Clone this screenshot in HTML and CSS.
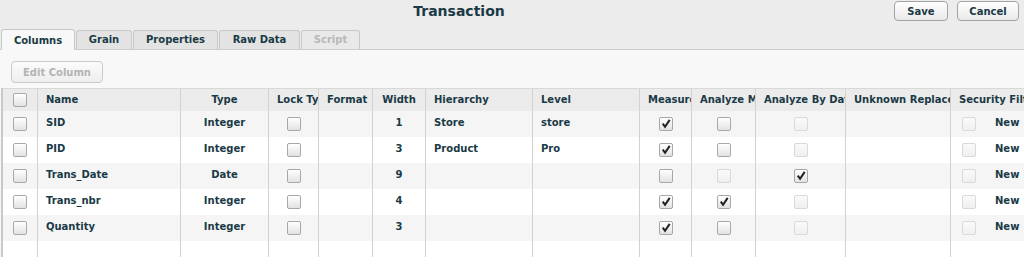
FILE: index.html
```html
<!DOCTYPE html>
<html lang="en">
<head>
    <meta charset="UTF-8">
    <title>Transaction</title>
    <link rel="stylesheet" href="styles.css">
</head>
<body>
    <div class="topbar">
        <h1 class="title">Transaction</h1>
        <div class="actions">
            <button class="btn btn-save">Save</button>
            <button class="btn btn-cancel">Cancel</button>
        </div>
    </div>
    <div class="tabs">
        <a class="tab tab-columns active">Columns</a>
        <a class="tab tab-grain">Grain</a>
        <a class="tab tab-props">Properties</a>
        <a class="tab tab-raw">Raw Data</a>
        <a class="tab tab-script disabled">Script</a>
    </div>
    <div class="panel">
        <div class="toolbar">
            <button class="btn btn-edit" disabled>Edit Column</button>
        </div>
        <div class="grid">
            <div class="row head">
                <div class="cell mid"><span class="cb"></span></div>
                <div class="cell">Name</div>
                <div class="cell center">Type</div>
                <div class="cell">Lock Type</div>
                <div class="cell">Format</div>
                <div class="cell center">Width</div>
                <div class="cell">Hierarchy</div>
                <div class="cell">Level</div>
                <div class="cell">Measure</div>
                <div class="cell">Analyze Measure</div>
                <div class="cell">Analyze By Date</div>
                <div class="cell">Unknown Replacement</div>
                <div class="cell">Security Filter</div>
            </div>
            <div class="row odd">
                <div class="cell mid"><span class="cb"></span></div>
                <div class="cell">SID</div>
                <div class="cell center">Integer</div>
                <div class="cell mid"><span class="cb"></span></div>
                <div class="cell"></div>
                <div class="cell center">1</div>
                <div class="cell">Store</div>
                <div class="cell">store</div>
                <div class="cell mid"><span class="cb checked"><svg viewBox="0 0 13 13"><path d="M3 6 L5.5 9.5 L10.5 2"/></svg></span></div>
                <div class="cell mid"><span class="cb"></span></div>
                <div class="cell mid"><span class="cb off"></span></div>
                <div class="cell"></div>
                <div class="cell sec"><span class="cb off"></span><a class="new">New</a></div>
            </div>
            <div class="row">
                <div class="cell mid"><span class="cb"></span></div>
                <div class="cell">PID</div>
                <div class="cell center">Integer</div>
                <div class="cell mid"><span class="cb"></span></div>
                <div class="cell"></div>
                <div class="cell center">3</div>
                <div class="cell">Product</div>
                <div class="cell">Pro</div>
                <div class="cell mid"><span class="cb checked"><svg viewBox="0 0 13 13"><path d="M3 6 L5.5 9.5 L10.5 2"/></svg></span></div>
                <div class="cell mid"><span class="cb"></span></div>
                <div class="cell mid"><span class="cb off"></span></div>
                <div class="cell"></div>
                <div class="cell sec"><span class="cb off"></span><a class="new">New</a></div>
            </div>
            <div class="row odd">
                <div class="cell mid"><span class="cb"></span></div>
                <div class="cell">Trans_Date</div>
                <div class="cell center">Date</div>
                <div class="cell mid"><span class="cb"></span></div>
                <div class="cell"></div>
                <div class="cell center">9</div>
                <div class="cell"></div>
                <div class="cell"></div>
                <div class="cell mid"><span class="cb"></span></div>
                <div class="cell mid"><span class="cb off"></span></div>
                <div class="cell mid"><span class="cb checked"><svg viewBox="0 0 13 13"><path d="M3 6 L5.5 9.5 L10.5 2"/></svg></span></div>
                <div class="cell"></div>
                <div class="cell sec"><span class="cb off"></span><a class="new">New</a></div>
            </div>
            <div class="row">
                <div class="cell mid"><span class="cb"></span></div>
                <div class="cell">Trans_nbr</div>
                <div class="cell center">Integer</div>
                <div class="cell mid"><span class="cb"></span></div>
                <div class="cell"></div>
                <div class="cell center">4</div>
                <div class="cell"></div>
                <div class="cell"></div>
                <div class="cell mid"><span class="cb checked"><svg viewBox="0 0 13 13"><path d="M3 6 L5.5 9.5 L10.5 2"/></svg></span></div>
                <div class="cell mid"><span class="cb checked"><svg viewBox="0 0 13 13"><path d="M3 6 L5.5 9.5 L10.5 2"/></svg></span></div>
                <div class="cell mid"><span class="cb off"></span></div>
                <div class="cell"></div>
                <div class="cell sec"><span class="cb off"></span><a class="new">New</a></div>
            </div>
            <div class="row odd">
                <div class="cell mid"><span class="cb"></span></div>
                <div class="cell">Quantity</div>
                <div class="cell center">Integer</div>
                <div class="cell mid"><span class="cb"></span></div>
                <div class="cell"></div>
                <div class="cell center">3</div>
                <div class="cell"></div>
                <div class="cell"></div>
                <div class="cell mid"><span class="cb checked"><svg viewBox="0 0 13 13"><path d="M3 6 L5.5 9.5 L10.5 2"/></svg></span></div>
                <div class="cell mid"><span class="cb"></span></div>
                <div class="cell mid"><span class="cb off"></span></div>
                <div class="cell"></div>
                <div class="cell sec"><span class="cb off"></span><a class="new">New</a></div>
            </div>
            <div class="row filler">
                <div class="cell"></div><div class="cell"></div><div class="cell"></div>
                <div class="cell"></div><div class="cell"></div><div class="cell"></div>
                <div class="cell"></div><div class="cell"></div><div class="cell"></div>
                <div class="cell"></div><div class="cell"></div><div class="cell"></div>
                <div class="cell"></div>
            </div>
        </div>
    </div>
</body>
</html>
```

FILE: styles.css
```css
body {
    margin: 0;
    padding: 0;
    font-family: "DejaVu Sans", Verdana, sans-serif;
    font-size: 10px;
    color: #1a3a46;
    background-color: #ececec;
    overflow: hidden;
}
.topbar {
    display: flex;
    height: 29px;
}
.title {
    flex: 1;
    margin: 0;
    padding-left: 24px;
    text-align: center;
    font-size: 14px;
    line-height: 22px;
    font-weight: bold;
    color: #1a3a46;
}
.actions {
    display: flex;
    gap: 9px;
    padding: 1px 5px 0 0;
}
.btn {
    font-family: inherit;
    font-size: 10px;
    font-weight: bold;
    color: #1a3a46;
    height: 20px;
    padding: 0;
    border: 1px solid #a3a3a3;
    border-radius: 4px;
    background: linear-gradient(#ffffff, #e9e9e9);
    cursor: pointer;
}
.btn-save {
    width: 54px;
}
.btn-cancel {
    width: 62px;
}
.tabs {
    display: flex;
    align-items: flex-end;
    height: 20px;
    padding-left: 1px;
    border-bottom: 1px solid #cdcdcd;
}
.tab {
    box-sizing: border-box;
    height: 19px;
    margin-right: 1px;
    border: 1px solid #c8c8c8;
    border-bottom: none;
    border-radius: 3px 3px 0 0;
    background-color: #e3e3e3;
    font-weight: bold;
    line-height: 17px;
    text-align: center;
    cursor: pointer;
}
.tab.active {
    height: 21px;
    margin-bottom: -1px;
    background-color: #f8f8f8;
    line-height: 22px;
}
.tab.disabled {
    color: #b8b8b8;
    background-color: #e9e9e9;
}
.tab-columns { width: 74px; }
.tab-grain { width: 56px; }
.tab-props { width: 85px; }
.tab-raw { width: 81px; }
.tab-script { width: 59px; }
.panel {
    background-color: #f8f8f8;
    height: 207px;
    overflow: hidden;
}
.toolbar {
    padding: 11px 0 5px 11px;
}
.btn-edit {
    width: 92px;
    height: 22px;
    color: #b3b3b3;
    border-color: #cacaca;
    background: linear-gradient(#fbfbfb, #eeeeee);
    cursor: default;
}
.grid {
    margin-left: 1px;
    border-left: 2px solid #c9c9c9;
    background-color: #ffffff;
    height: 200px;
}
.row {
    display: grid;
    grid-template-columns: 35px 143px 88px 50px 54px 53px 107px 107px 52px 64px 90px 105px 110px;
    height: 26px;
}
.row.head {
    height: 23px;
    background-color: #ebebeb;
    border-top: 1px solid #d8d8d8;
    box-sizing: border-box;
}
.row.odd {
    background-color: #f5f5f5;
}
.row.filler {
    height: 40px;
}
.cell {
    box-sizing: border-box;
    border-right: 1px solid #d2d2d2;
    padding: 5px 0 0 8px;
    font-weight: bold;
    line-height: 14px;
    white-space: nowrap;
    overflow: hidden;
}
.head .cell {
    padding-top: 4px;
}
.cell.center {
    text-align: center;
    padding-left: 0;
}
.cell.mid {
    display: flex;
    justify-content: center;
    padding: 6px 0 0 0;
}
.head .cell.mid {
    padding-top: 4px;
}
.cell.sec {
    display: flex;
    padding: 6px 0 0 11px;
}
.new {
    margin: -1px 0 0 19px;
    cursor: pointer;
}
.cb {
    box-sizing: border-box;
    display: block;
    width: 14px;
    height: 14px;
    border: 1px solid #a8a8a8;
    border-radius: 2px;
    background: linear-gradient(#ffffff, #e2e2e2);
}
.cb.off {
    border-color: #d9d9d9;
    background: linear-gradient(#fafafa, #efefef);
}
.cb svg {
    display: block;
    width: 12px;
    height: 12px;
}
.cb svg path {
    fill: none;
    stroke: #222222;
    stroke-width: 2.2;
}
```
